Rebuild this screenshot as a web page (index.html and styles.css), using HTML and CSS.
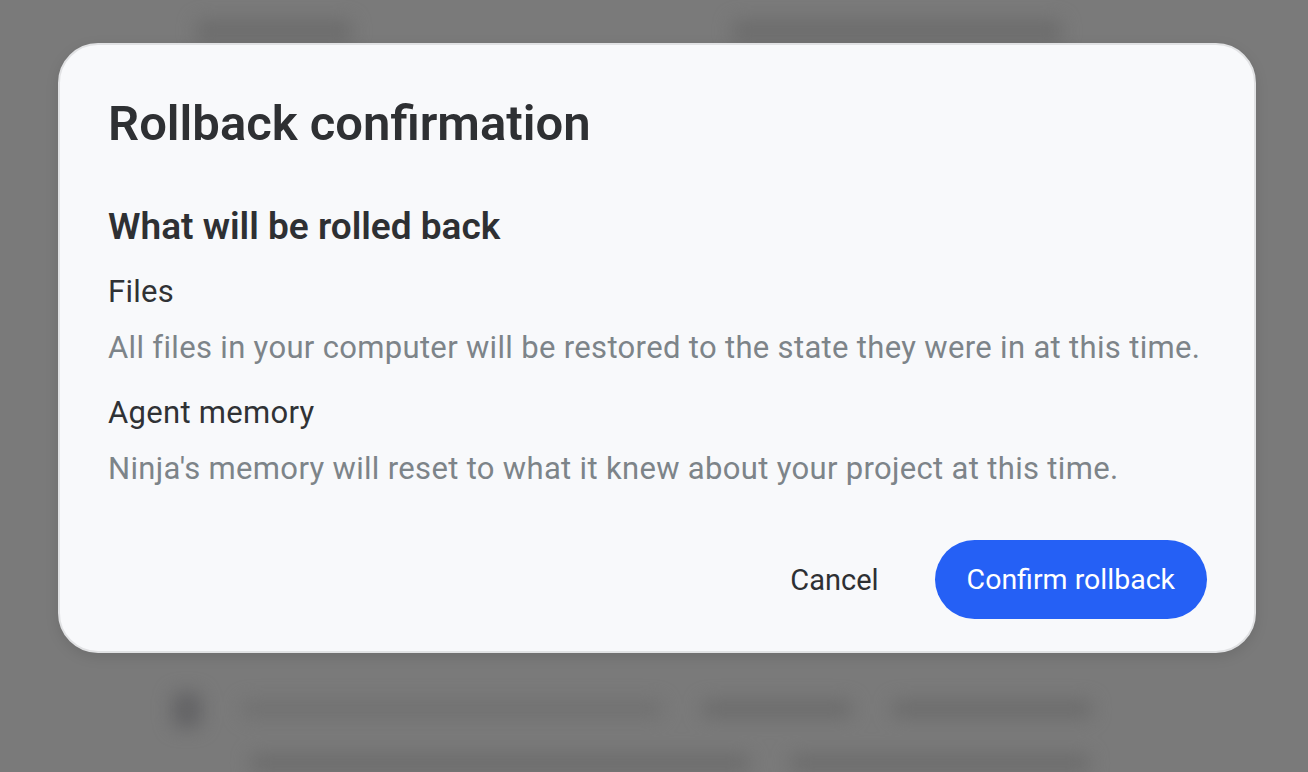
FILE: index.html
```html
<!DOCTYPE html>
<html>
<head>
<meta charset="utf-8">
<link rel="stylesheet" href="styles.css">
</head>
<body>
<div class="backdrop">
  <div class="bg-top">
    <div class="blur-bar bar-a"></div>
    <div class="blur-bar bar-b"></div>
  </div>
  <div class="bg-mid"></div>
  <div class="bg-bottom">
    <div class="blur-icon"></div>
    <div class="bg-lines">
      <div class="blur-row">
        <div class="blur-bar bar-c"></div>
        <div class="blur-bar bar-d"></div>
        <div class="blur-bar bar-e"></div>
      </div>
      <div class="blur-row">
        <div class="blur-bar bar-f"></div>
        <div class="blur-bar bar-g"></div>
      </div>
    </div>
  </div>
</div>
<div class="dialog">
  <h1 class="title">Rollback confirmation</h1>
  <h2 class="subtitle">What will be rolled back</h2>
  <div class="item item-first">
    <div class="item-label">Files</div>
    <div class="item-desc">All files in your computer will be restored to the state they were in at this time.</div>
  </div>
  <div class="item">
    <div class="item-label">Agent memory</div>
    <div class="item-desc">Ninja's memory will reset to what it knew about your project at this time.</div>
  </div>
  <div class="actions">
    <button class="btn-cancel">Cancel</button>
    <button class="btn-confirm">Confirm rollback</button>
  </div>
</div>
</body>
</html>
```
FILE: styles.css
```css
html, body {
  margin: 0;
  padding: 0;
}
body {
  width: 1308px;
  height: 772px;
  overflow: hidden;
  background: #7a7a7a;
  font-family: Roboto, "Liberation Sans", Arial, sans-serif;
  position: relative;
}
.backdrop {
  width: 100%;
  height: 100%;
  filter: blur(9px);
  display: flex;
  flex-direction: column;
}
.bg-top {
  display: flex;
  gap: 380px;
  padding: 20px 0 0 196px;
  height: 42px;
}
.blur-bar {
  background: #6c6c6c;
  border-radius: 6px;
}
.bar-a { width: 156px; height: 22px; }
.bar-b { width: 330px; height: 22px; }
.bg-mid {
  height: 618px;
}
.bg-bottom {
  display: flex;
  gap: 40px;
  padding-left: 172px;
}
.blur-icon {
  width: 30px;
  height: 36px;
  background: #646466;
  border-radius: 8px;
  margin-top: 22px;
}
.bg-lines {
  display: flex;
  flex-direction: column;
  gap: 36px;
  padding-top: 30px;
}
.blur-row {
  display: flex;
  gap: 40px;
}
.bar-c { width: 420px; height: 18px; background: #717171; }
.bar-d { width: 150px; height: 18px; }
.bar-e { width: 200px; height: 18px; }
.bar-f { width: 500px; height: 18px; margin-left: 8px; }
.bar-g { width: 300px; height: 18px; }

.dialog {
  position: absolute;
  left: 58px;
  top: 43px;
  width: 1198px;
  height: 610px;
  box-sizing: border-box;
  background: #f8f9fb;
  border: 2px solid #e1e2e4;
  border-radius: 40px;
  padding: 49px 47px 0 48px;
  display: flex;
  flex-direction: column;
  box-shadow: 0 4px 14px rgba(0,0,0,0.10);
}
.title {
  margin: 0;
  font-size: 49px;
  font-weight: 600;
  color: #2e3033;
  line-height: 60px;
}
.subtitle {
  margin: 51px 0 0 0;
  font-size: 37px;
  font-weight: 600;
  color: #2e3033;
  line-height: 44px;
}
.item-first {
  margin-top: 23px;
}
.item + .item {
  margin-top: 25px;
}
.item-label {
  font-size: 31px;
  color: #303235;
  line-height: 40px;
  letter-spacing: 0.3px;
}
.item-desc {
  margin-top: 16px;
  font-size: 31px;
  color: #7d8489;
  line-height: 40px;
  letter-spacing: 0.33px;
}
.actions {
  margin-top: auto;
  margin-bottom: 32px;
  display: flex;
  justify-content: flex-end;
  align-items: center;
  gap: 56px;
}
.btn-cancel {
  border: none;
  background: none;
  font-family: inherit;
  font-size: 29px;
  color: #2e3033;
  padding: 0;
}
.btn-confirm {
  border: none;
  background: #2560f5;
  color: #ffffff;
  font-family: inherit;
  font-size: 28.5px;
  height: 79px;
  padding: 0 32px;
  border-radius: 40px;
}
```
